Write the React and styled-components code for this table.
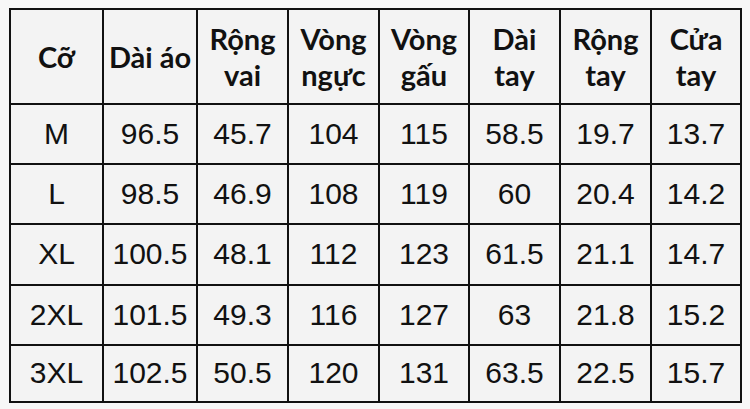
import React from 'react';
import styled, { createGlobalStyle } from 'styled-components';

const GlobalStyle = createGlobalStyle`
  html, body {
    margin: 0;
    padding: 0;
    background: #f7f7f7;
  }
`;

const Page = styled.div`
  box-sizing: border-box;
  height: 409px;
  padding: 8px 10px 6px 9px;
  width: 750px;
`;

const Table = styled.table`
  background: #f3f3f3;
  border-collapse: collapse;
  border: 2.5px solid #111;
  height: 395px;
  table-layout: fixed;
  width: 731px;
`;

const HeadCell = styled.th`
  border: 2px solid #111;
  color: #111;
  font-family: Lato, 'Open Sans', sans-serif;
  font-size: 29px;
  font-weight: 700;
  height: 93px;
  line-height: 36px;
  padding: 0;
  text-align: center;
  vertical-align: middle;
  white-space: nowrap;
  width: ${(p) => p.w - 2}px;
`;

const Cell = styled.td`
  border: 2px solid #111;
  color: #111;
  font-family: 'Liberation Sans', Arial, sans-serif;
  font-size: 30px;
  height: ${(p) => p.h || 56}px;
  padding: 0;
  text-align: center;
  vertical-align: middle;
  white-space: nowrap;
`;

const headers = [
  ['Cỡ'],
  ['Dài áo'],
  ['Rộng', 'vai'],
  ['Vòng', 'ngực'],
  ['Vòng', 'gấu'],
  ['Dài', 'tay'],
  ['Rộng', 'tay'],
  ['Cửa', 'tay'],
];

const widths = [93, 94, 91, 91, 90, 91, 91, 90];

const rows = [
  ['M', '96.5', '45.7', '104', '115', '58.5', '19.7', '13.7'],
  ['L', '98.5', '46.9', '108', '119', '60', '20.4', '14.2'],
  ['XL', '100.5', '48.1', '112', '123', '61.5', '21.1', '14.7'],
  ['2XL', '101.5', '49.3', '116', '127', '63', '21.8', '15.2'],
  ['3XL', '102.5', '50.5', '120', '131', '63.5', '22.5', '15.7'],
];

const App = () => (
  <>
    <GlobalStyle />
    <Page>
      <Table>
        <thead>
          <tr>
            {headers.map((lines, i) => (
              <HeadCell key={i} w={widths[i]}>
                {lines.map((l, j) => (
                  <div key={j}>{l}</div>
                ))}
              </HeadCell>
            ))}
          </tr>
        </thead>
        <tbody>
          {rows.map((row, r) => (
            <tr key={r}>
              {row.map((v, c) => (
                <Cell key={c} h={r === rows.length - 1 ? 55 : 58}>
                  {v}
                </Cell>
              ))}
            </tr>
          ))}
        </tbody>
      </Table>
    </Page>
  </>
);

export default App;
